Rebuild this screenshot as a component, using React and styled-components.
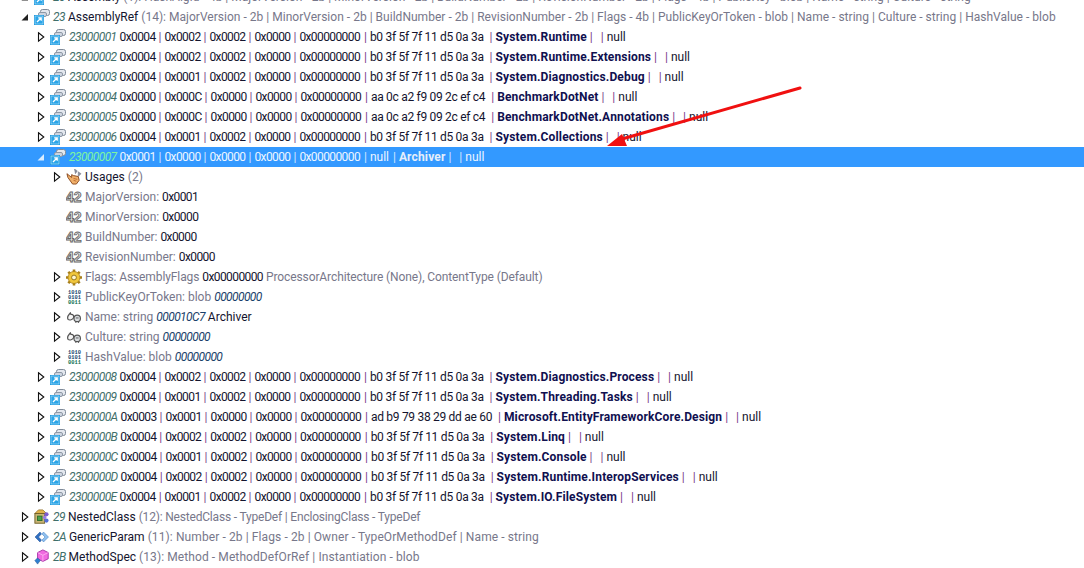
import styled, { createGlobalStyle } from 'styled-components'

const refs = [
    ['23000001', '0x0004 0x0002 0x0002 0x0000', 'b0 3f 5f 7f 11 d5 0a 3a', 'System.Runtime'],
    ['23000002', '0x0004 0x0002 0x0002 0x0000', 'b0 3f 5f 7f 11 d5 0a 3a', 'System.Runtime.Extensions'],
    ['23000003', '0x0004 0x0001 0x0002 0x0000', 'b0 3f 5f 7f 11 d5 0a 3a', 'System.Diagnostics.Debug'],
    ['23000004', '0x0000 0x000C 0x0000 0x0000', 'aa 0c a2 f9 09 2c ef c4', 'BenchmarkDotNet'],
    ['23000005', '0x0000 0x000C 0x0000 0x0000', 'aa 0c a2 f9 09 2c ef c4', 'BenchmarkDotNet.Annotations'],
    ['23000006', '0x0004 0x0001 0x0002 0x0000', 'b0 3f 5f 7f 11 d5 0a 3a', 'System.Collections'],
]

const refsAfter = [
    ['23000008', '0x0004 0x0002 0x0002 0x0000', 'b0 3f 5f 7f 11 d5 0a 3a', 'System.Diagnostics.Process'],
    ['23000009', '0x0004 0x0001 0x0002 0x0000', 'b0 3f 5f 7f 11 d5 0a 3a', 'System.Threading.Tasks'],
    ['2300000A', '0x0003 0x0001 0x0000 0x0000', 'ad b9 79 38 29 dd ae 60', 'Microsoft.EntityFrameworkCore.Design'],
    ['2300000B', '0x0004 0x0002 0x0002 0x0000', 'b0 3f 5f 7f 11 d5 0a 3a', 'System.Linq'],
    ['2300000C', '0x0004 0x0001 0x0002 0x0000', 'b0 3f 5f 7f 11 d5 0a 3a', 'System.Console'],
    ['2300000D', '0x0004 0x0002 0x0002 0x0000', 'b0 3f 5f 7f 11 d5 0a 3a', 'System.Runtime.InteropServices'],
    ['2300000E', '0x0004 0x0001 0x0002 0x0000', 'b0 3f 5f 7f 11 d5 0a 3a', 'System.IO.FileSystem'],
]

const Expander = ({ state }) => {
    if (state === 'none') return <ArrowBox />
    return (
        <ArrowBox>
            <svg width='16' height='16' viewBox='0 0 16 16'>
                {state === 'closed' && <path d='M6.5 3.8 L11.8 8 L6.5 12.2 Z' fill='#fff' stroke='#111' strokeWidth='1.1' />}
                {state === 'open' && <path d='M12 5 V11.5 H5.5 Z' fill='#222' />}
                {state === 'selected' && <path d='M12 5 V11.5 H5.5 Z' fill='#d8ecff' />}
            </svg>
        </ArrowBox>
    )
}

const RefIcon = () => (
    <svg width='16' height='16' viewBox='0 0 16 16'>
        <rect x='6.5' y='0.5' width='9' height='6' rx='2' fill='#e3e7ee' stroke='#7f8a99' />
        <rect x='4.5' y='3.5' width='8' height='4' rx='1.5' fill='#cdd4df' stroke='#8e98a6' />
        <rect x='0' y='6' width='10' height='10' fill='#1b9ae0' />
        <rect x='1' y='7' width='8' height='8' fill='#2aa5e8' stroke='#fff' strokeWidth='0.4' />
        <path d='M3 13 L7 9 M4.2 8.8 H7.2 V11.8' stroke='#fff' strokeWidth='1.3' fill='none' />
    </svg>
)

const UsagesIcon = () => (
    <svg width='16' height='16' viewBox='0 0 17 17'>
        <path d='M9 0 L12 2 L10 5 Z M13 3 L16 5 L13 8 Z' fill='#8d96a3' stroke='#667' strokeWidth='0.5' />
        <path d='M1 5 L6 9 L6 6 L8 7 L13 8 L14 12 L11 16 L7 16 L2 9 Z' fill='#f0b06a' stroke='#8a4a20' strokeWidth='1' />
        <path d='M8 10 L12 11 M8 12 L11 13' stroke='#b5642c' strokeWidth='0.9' />
    </svg>
)

const ConstIcon = () => (
    <svg width='16' height='14' viewBox='0 0 16 14'>
        <IconText x='0' y='12' fontSize='14' fontWeight='700' fill='#f2f2f2' stroke='#666' strokeWidth='0.9'>42</IconText>
    </svg>
)

const GearIcon = () => (
    <svg width='17' height='17' viewBox='0 0 16 16'>
        <path d='M8 0 V16 M0 8 H16 M2.3 2.3 L13.7 13.7 M13.7 2.3 L2.3 13.7' stroke='#a87f1a' strokeWidth='2.6' />
        <circle cx='8' cy='8' r='6' fill='#f0c63c' stroke='#a87f1a' strokeWidth='0.8' />
        <circle cx='8' cy='8' r='2.4' fill='#fff6d0' stroke='#8a6a14' strokeWidth='0.9' />
    </svg>
)

const BlobIcon = () => (
    <svg width='16' height='16' viewBox='0 0 16 16'>
        <BlobText x='8.5' y='5'>1010</BlobText>
        <BlobText x='8.5' y='10'>0101</BlobText>
        <BlobText x='8.5' y='15' fill='#0b6f50'>0011</BlobText>
    </svg>
)

const StringIcon = () => (
    <svg width='16' height='11' viewBox='0 0 16 12'>
        <path d='M1 6.5 C1 3.5 3 2.5 4 1 L4.6 2.6 C7 2.2 8 4 7.5 6.2 C7 8.5 3 9.4 1.5 8 Z' fill='#f4f4f4' stroke='#555' strokeWidth='1.3' />
        <circle cx='11.5' cy='7' r='3.5' fill='#d8dcdf' stroke='#555' strokeWidth='1.3' />
        <path d='M10 10 V12 M13 10 V12 M10 6.5 H13' stroke='#555' strokeWidth='1' />
    </svg>
)

const NestedIcon = () => (
    <svg width='18' height='18' viewBox='0 0 18 18'>
        <path d='M5 1 L10 1 L14 5 L1 5 Z' fill='#e2b44c' stroke='#8c6a1e' strokeWidth='0.8' />
        <rect x='1' y='5' width='11' height='11' fill='#c9b675' stroke='#6e5c22' />
        <rect x='4' y='8' width='5' height='5' fill='#4ca04c' stroke='#2a6a2a' />
        <circle cx='14' cy='6' r='2.4' fill='#7d5bd0' />
        <circle cx='14' cy='13' r='2.4' fill='#5470d8' />
        <circle cx='12' cy='9.5' r='2' fill='#9a7be0' />
    </svg>
)

const GenericIcon = () => (
    <svg width='16' height='16' viewBox='0 0 16 16'>
        <path d='M6 3 L1 8 L6 13 L7.5 11 L4.5 8 L7.5 5 Z' fill='#2f6fc0' stroke='#1d4f96' strokeWidth='0.5' />
        <path d='M9.5 3 L14.5 8 L9.5 13 L8 11 L11 8 L8 5 Z' fill='#8fc0ee' stroke='#3a78c0' strokeWidth='0.5' />
    </svg>
)

const MethodSpecIcon = () => (
    <svg width='18' height='18' viewBox='0 0 18 18'>
        <path d='M10 1 L16 4 V11 L10 14 L4 11 V4 Z' fill='#f06ae0' stroke='#a52fa5' />
        <path d='M4 4 L10 7 L16 4 M10 7 V14' fill='none' stroke='#ffc0f5' strokeWidth='0.8' />
        <path d='M4 10 L7 13 L4 17 L1 13 Z' fill='#2f7fd0' stroke='#1d558f' strokeWidth='0.6' />
    </svg>
)

const Pipe = ({ selected, gap }) => <Sep $selected={selected} $gap={gap}> | </Sep>

const Hexes = ({ values, selected }) =>
    values.split(' ').map((value, i) => (
        <span key={i}>
            {i > 0 && <Pipe selected={selected} />}
            <Hex $selected={selected}>{value}</Hex>
        </span>
    ))

const RefRow = ({ token, hexes, blob, name }) => (
    <Row $depth={2}>
        <Expander state='closed' />
        <IconBox><RefIcon /></IconBox>
        <Label>
            <Token>{token}</Token> <Hexes values={hexes} />
            <Pipe />
            <Hex>0x00000000</Hex>
            <Pipe gap={1} />
            <Blob>{blob}</Blob>
            {'  '}
            <Sep>| </Sep>
            <Name>{name}</Name>
            <Pipe /><Pipe gap={2} />
            <Value>null</Value>
        </Label>
    </Row>
)

const Schema = ({ icon, token, name, count, columns, track = 0, state = 'closed' }) => (
    <Row $depth={1}>
        <Expander state={state} />
        <IconBox>{icon}</IconBox>
        <Label>
            <Token>{token}</Token> <Value>{name}</Value> <Muted $track={track}>({count}): {columns}</Muted>
        </Label>
    </Row>
)

const Field = ({ icon, state = 'none', children }) => (
    <Row $depth={3}>
        <Expander state={state} />
        <IconBox>{icon}</IconBox>
        <Label>{children}</Label>
    </Row>
)

const App = () => (
    <>
        <GlobalStyle />
        <Page>
            <Tree>
                <Schema
                    icon={<RefIcon />}
                    token='20'
                    name='Assembly'
                    count={1}
                    columns='HashAlgId - 4b | MajorVersion - 2b | MinorVersion - 2b | BuildNumber - 2b | RevisionNumber - 2b | Flags - 4b | PublicKey - blob | Name - string | Culture - string'
                    state='open'
                />
                <Schema
                    icon={<RefIcon />}
                    token='23'
                    name='AssemblyRef'
                    count={14}
                    track={0.02}
                    columns='MajorVersion - 2b | MinorVersion - 2b | BuildNumber - 2b | RevisionNumber - 2b | Flags - 4b | PublicKeyOrToken - blob | Name - string | Culture - string | HashValue - blob'
                    state='open'
                />
                {refs.map(([token, hexes, blob, name]) => (
                    <RefRow key={token} token={token} hexes={hexes} blob={blob} name={name} />
                ))}
                <Row $depth={2} $selected>
                    <Expander state='selected' />
                    <IconBox><RefIcon /></IconBox>
                    <Label $selected>
                        <Token $selected>23000007</Token> <Hexes values='0x0001 0x0000 0x0000 0x0000 0x00000000' selected />
                        <Pipe selected gap={1} />
                        <Value $selected>null</Value>
                        <Pipe selected gap={1} />
                        <Name $selected>Archiver</Name>
                        <Pipe selected /><Pipe selected gap={2} />
                        <Value $selected>null</Value>
                    </Label>
                </Row>
                <Field icon={<UsagesIcon />} state='closed'>
                    <Value>Usages</Value> <Muted>(2)</Muted>
                </Field>
                <Field icon={<ConstIcon />}><Muted>MajorVersion:</Muted> <Hex>0x0001</Hex></Field>
                <Field icon={<ConstIcon />}><Muted>MinorVersion:</Muted> <Hex>0x0000</Hex></Field>
                <Field icon={<ConstIcon />}><Muted>BuildNumber:</Muted> <Hex>0x0000</Hex></Field>
                <Field icon={<ConstIcon />}><Muted>RevisionNumber:</Muted> <Hex>0x0000</Hex></Field>
                <Field icon={<GearIcon />} state='closed'>
                    <Muted $track={-0.1}>Flags: AssemblyFlags</Muted> <Hex>0x00000000</Hex> <Muted $track={-0.1}>ProcessorArchitecture (None), ContentType (Default)</Muted>
                </Field>
                <Field icon={<BlobIcon />} state='closed'>
                    <Muted>PublicKeyOrToken: blob</Muted> <Offset>00000000</Offset>
                </Field>
                <Field icon={<StringIcon />} state='closed'>
                    <Muted>Name: string</Muted> <Offset>000010C7</Offset> <Value>Archiver</Value>
                </Field>
                <Field icon={<StringIcon />} state='closed'>
                    <Muted>Culture: string</Muted> <Offset>00000000</Offset>
                </Field>
                <Field icon={<BlobIcon />} state='closed'>
                    <Muted>HashValue: blob</Muted> <Offset>00000000</Offset>
                </Field>
                {refsAfter.map(([token, hexes, blob, name]) => (
                    <RefRow key={token} token={token} hexes={hexes} blob={blob} name={name} />
                ))}
                <Schema icon={<NestedIcon />} token='29' name='NestedClass' count={12} track={-0.19} columns='NestedClass - TypeDef | EnclosingClass - TypeDef' />
                <Schema icon={<GenericIcon />} token='2A' name='GenericParam' count={11} track={0.1} columns='Number - 2b | Flags - 2b | Owner - TypeOrMethodDef | Name - string' />
                <Schema icon={<MethodSpecIcon />} token='2B' name='MethodSpec' count={13} track={0.09} columns='Method - MethodDefOrRef | Instantiation - blob' />
            </Tree>
            <Callout width='1084' height='568' viewBox='0 0 1084 568'>
                <path d='M800 88 L622 139' stroke='#f01010' strokeWidth='3' strokeLinecap='round' />
                <path d='M607 146 L622 134 L627 146 Z' fill='#f01010' />
            </Callout>
        </Page>
    </>
)

const GlobalStyle = createGlobalStyle`
    html, body {
        margin: 0;
        height: 100%;
        background: #fff;
        overflow: hidden;
    }
`

const Page = styled.div`
    position: relative;
    width: 1084px;
    height: 568px;
    overflow: hidden;
    font-family: Roboto, 'Noto Sans', sans-serif;
    font-size: 12px;
    color: #111;
`

const Tree = styled.div`
    margin-top: -13px;
`

const Row = styled.div`
    display: flex;
    align-items: center;
    height: 20px;
    padding-left: ${props => props.$depth * 16}px;
    background-color: ${props => (props.$selected ? '#3399ff' : 'transparent')};
`

const ArrowBox = styled.span`
    display: flex;
    flex: none;
    width: 16px;
    height: 16px;
`

const IconBox = styled.span`
    display: flex;
    flex: none;
    align-items: center;
    justify-content: center;
    width: 16px;
    height: 18px;
    margin-left: 2px;
    margin-right: 3px;
`

const IconText = styled.text`
    font-family: 'Liberation Sans', sans-serif;
`

const BlobText = styled.text.attrs(props => ({
    fontSize: 5.4,
    fontWeight: 700,
    textAnchor: 'middle',
    fill: props.fill || '#15466e',
}))`
    font-family: 'Liberation Mono', monospace;
`

const Label = styled.span`
    white-space: pre;
    color: ${props => (props.$selected ? '#fff' : '#111')};
`

const Token = styled.i`
    letter-spacing: -0.6px;
    color: ${props => (props.$selected ? '#7df5a0' : '#3f6f6a')};
`

const Value = styled.span`
    color: ${props => (props.$selected ? '#eef6ff' : '#14142e')};
`

const Hex = styled(Value)`
    letter-spacing: -0.6px;
`

const Blob = styled(Value)`
    letter-spacing: -0.3px;
`

const Sep = styled.span`
    margin-left: ${props => props.$gap || 0}px;
    color: ${props => (props.$selected ? '#d6e6ff' : '#7a3d8c')};
`

const Name = styled.b`
    font-weight: 700;
    letter-spacing: 0.15px;
    color: ${props => (props.$selected ? '#e6effa' : '#10104f')};
`

const Muted = styled.span`
    letter-spacing: ${props => props.$track || 0}px;
    color: #77778a;
`

const Offset = styled.i`
    letter-spacing: -0.6px;
    color: #1a3f6a;
`

const Callout = styled.svg`
    position: absolute;
    top: 0;
    left: 0;
    pointer-events: none;
`

export default App
